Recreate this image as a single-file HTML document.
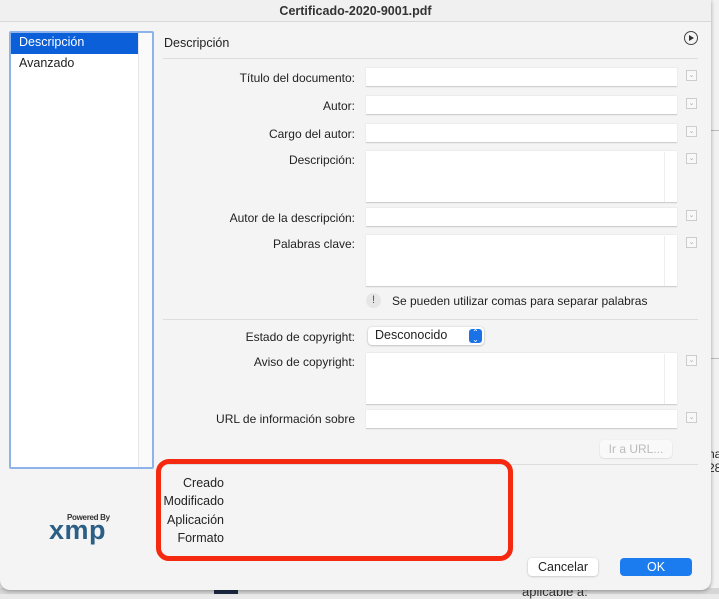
<!DOCTYPE html>
<html><head><meta charset="utf-8"><style>
*{box-sizing:border-box;margin:0;padding:0}
body{width:719px;height:594px;overflow:hidden;background:#e9e9e9;font-family:"Liberation Sans",sans-serif;font-size:12px;color:#222;position:relative}
.a{position:absolute}
.dlg{left:0;top:0;width:711px;height:590px;background:#f4f4f4;border-radius:0 0 10px 10px;box-shadow:0 1px 4px rgba(0,0,0,.35)}
.inp{position:absolute;background:#fff;border-bottom:1px solid #cfcfcf;box-shadow:0 0 1px #ccc}
.lbl{position:absolute;right:364px;text-align:right;white-space:nowrap}
.dd{position:absolute;left:686px;width:11px;height:11px;border:1px solid #ccc;background:#f8f8f8;font-size:7px;color:#aaa;text-align:center;line-height:9px}
</style></head><body>
<div class="a" style="left:711px;top:0;width:8px;height:594px;background:#f2f2f2"></div>
<div class="a" style="left:711px;top:130px;width:8px;height:1px;background:#bbb"></div>
<div class="a" style="left:711px;top:358px;width:8px;height:1px;background:#bbb"></div>
<div class="a" style="left:704px;top:66px;font-size:12px">1</div>
<div class="a" style="left:708px;top:447px;font-size:12px">na</div>
<div class="a" style="left:708px;top:461px;font-size:12px">28</div>
<div class="a" style="left:0;top:588px;width:719px;height:6px;background:#d6d6d6"></div>
<div class="a" style="left:214px;top:586px;width:24px;height:8px;background:#1d2a44"></div>
<div class="a" style="left:522px;top:584px;font-size:13px;color:#333">aplicable a:</div>
<div class="a dlg"></div>
<div class="a" style="left:0;top:0;width:711px;height:22px;background:#f0f0f0;border-bottom:1px solid #d8d8d8;text-align:center;font-weight:bold;font-size:12.5px;line-height:22px;color:#333">Certificado-2020-9001.pdf</div>
<div class="a" style="left:9px;top:31px;width:145px;height:438px;border:2px solid #8db3ea;border-radius:2px;background:#fff"></div>
<div class="a" style="left:138px;top:33px;width:14px;height:434px;background:#fafafa;border-left:1px solid #e6e6e6"></div>
<div class="a" style="left:11px;top:33px;width:127px;height:21px;background:#0b5fd8;color:#fff;padding:2px 0 0 8px;font-size:12.5px">Descripción</div>
<div class="a" style="left:19px;top:56px;font-size:12.5px">Avanzado</div>
<div class="a" style="left:164px;top:36px;font-size:12.5px">Descripción</div>
<div class="a" style="left:684px;top:31px;width:14px;height:14px;border:1.2px solid #444;border-radius:50%"></div>
<div class="a" style="left:689px;top:35px;width:0;height:0;border-left:5px solid #333;border-top:3px solid transparent;border-bottom:3px solid transparent"></div>
<div class="a" style="left:163px;top:58px;width:535px;height:1px;background:#ddd"></div>

<div class="lbl" style="top:71px">Título del documento:</div>
<div class="inp" style="left:366px;top:68px;width:311px;height:19px"></div><div class="dd" style="top:70px">⌄</div>
<div class="lbl" style="top:99px">Autor:</div>
<div class="inp" style="left:366px;top:96px;width:311px;height:19px"></div><div class="dd" style="top:98px">⌄</div>
<div class="lbl" style="top:127px">Cargo del autor:</div>
<div class="inp" style="left:366px;top:124px;width:311px;height:19px"></div><div class="dd" style="top:126px">⌄</div>
<div class="lbl" style="top:153px">Descripción:</div>
<div class="inp" style="left:366px;top:151px;width:311px;height:52px"></div><div class="a" style="left:664px;top:152px;width:1px;height:50px;background:#eee"></div><div class="dd" style="top:153px">⌄</div>
<div class="lbl" style="top:211px">Autor de la descripción:</div>
<div class="inp" style="left:366px;top:208px;width:311px;height:19px"></div><div class="dd" style="top:210px">⌄</div>
<div class="lbl" style="top:237px">Palabras clave:</div>
<div class="inp" style="left:366px;top:235px;width:311px;height:52px"></div><div class="a" style="left:664px;top:236px;width:1px;height:50px;background:#eee"></div><div class="dd" style="top:237px">⌄</div>
<div class="a" style="left:366px;top:293px;width:15px;height:15px;border-radius:50%;background:#e6e6e6;text-align:center;font-size:11px;line-height:15px;color:#555">!</div>
<div class="a" style="left:392px;top:294px;font-size:12px">Se pueden utilizar comas para separar palabras</div>
<div class="a" style="left:163px;top:319px;width:535px;height:1px;background:#ddd"></div>
<div class="lbl" style="top:330px">Estado de copyright:</div>
<div class="a" style="left:368px;top:327px;width:116px;height:18px;background:#fff;border-radius:4px;box-shadow:0 0.5px 2px rgba(0,0,0,.3);padding:1px 0 0 7px;font-size:12.5px">Desconocido</div>
<div class="a" style="left:469px;top:329px;width:13px;height:14px;background:#1a72e8;border-radius:3px;color:#fff;font-size:8px;text-align:center;line-height:7px">⌃<br>⌄</div>
<div class="lbl" style="top:355px">Aviso de copyright:</div>
<div class="inp" style="left:366px;top:353px;width:311px;height:52px"></div><div class="a" style="left:664px;top:354px;width:1px;height:50px;background:#eee"></div><div class="dd" style="top:355px">⌄</div>
<div class="lbl" style="top:412px">URL de información sobre</div>
<div class="inp" style="left:366px;top:410px;width:311px;height:19px"></div><div class="dd" style="top:412px">⌄</div>
<div class="a" style="left:600px;top:440px;width:72px;height:18px;background:#f9f9f9;border-radius:4px;box-shadow:0 0.5px 1.5px rgba(0,0,0,.15);color:#bbb;text-align:center;line-height:18px">Ir a URL...</div>
<div class="a" style="left:163px;top:464px;width:535px;height:1px;background:#ddd"></div>

<div class="a" style="left:156px;top:459px;width:357px;height:102px;border:5px solid #f4290f;border-radius:13px"></div>
<div class="a" style="left:100px;top:474px;width:124px;text-align:right;line-height:18.3px;font-size:12.5px">Creado<br>Modificado<br>Aplicación<br>Formato</div>

<div class="a" style="left:67px;top:513px;font-size:8px;font-weight:bold;color:#333;letter-spacing:-0.3px">Powered By</div>
<div class="a" style="left:49px;top:515px;font-size:27px;font-weight:bold;color:#2b5f86;letter-spacing:0.5px;line-height:30px">xmp</div>

<div class="a" style="left:528px;top:558px;width:70px;height:18px;background:#fff;border-radius:4px;box-shadow:0 0.5px 2px rgba(0,0,0,.25);text-align:center;line-height:18px;font-size:12.5px">Cancelar</div>
<div class="a" style="left:620px;top:558px;width:72px;height:18px;background:#1b7cf0;border-radius:4px;color:#fff;text-align:center;line-height:18px;font-size:12.5px">OK</div>
</body></html>
